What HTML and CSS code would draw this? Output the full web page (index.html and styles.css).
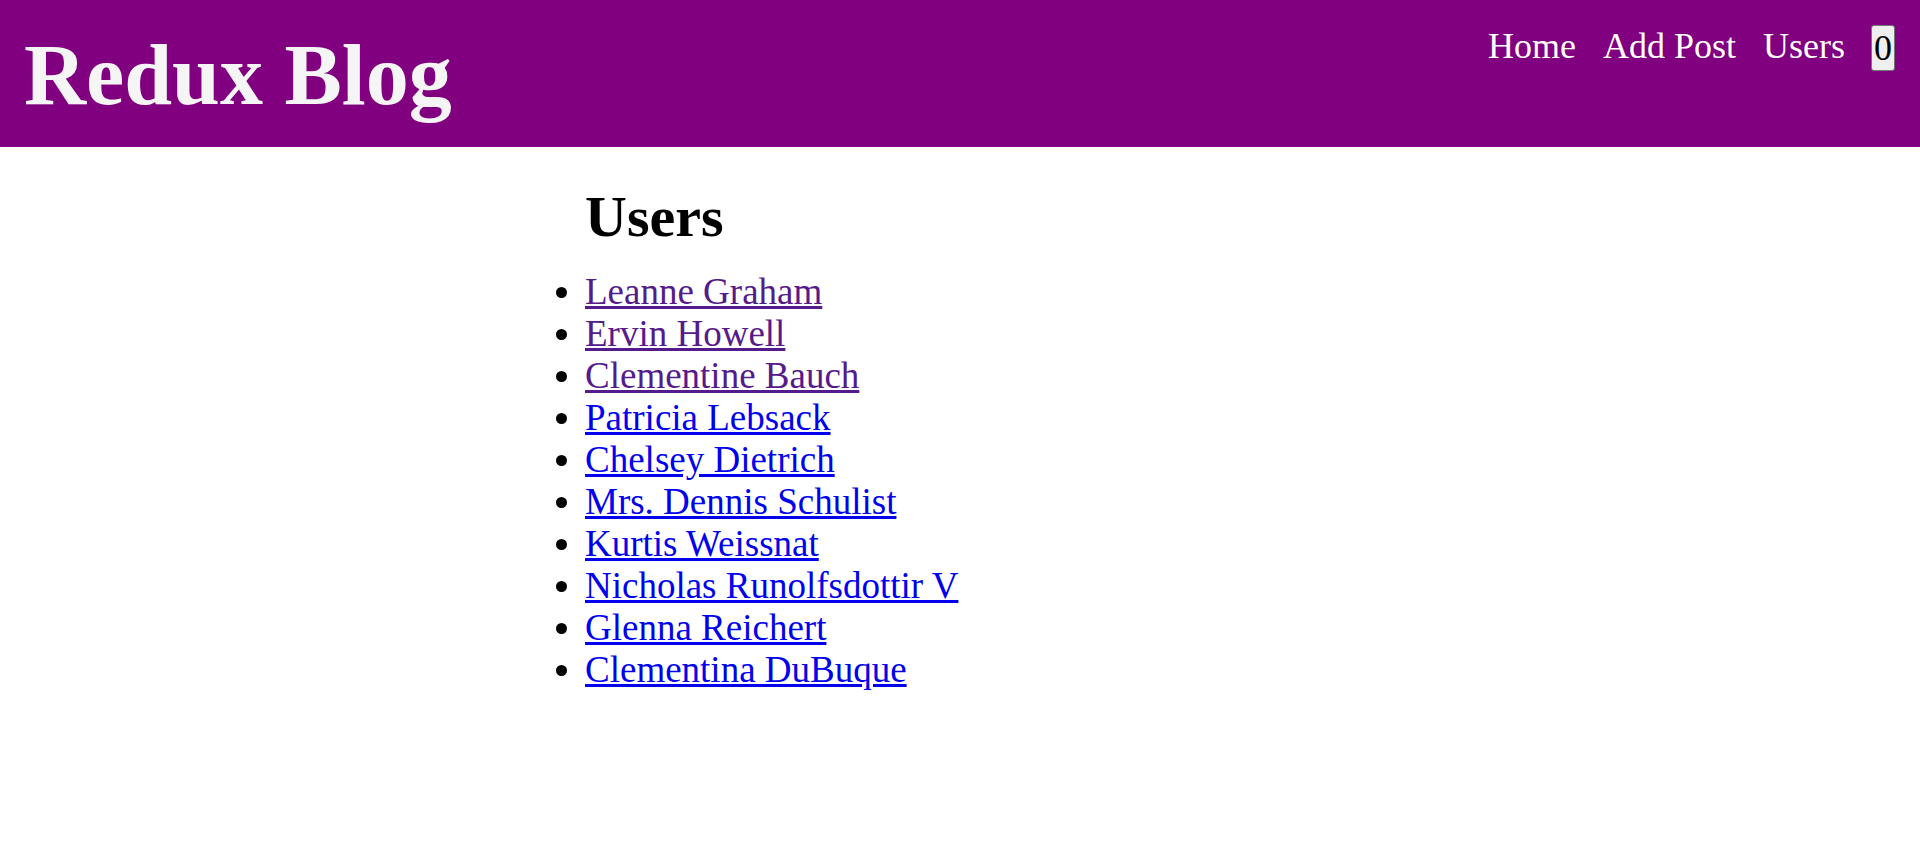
FILE: index.html
```html
<!DOCTYPE html>
<html lang="en">
<head>
<meta charset="utf-8">
<title>Redux Blog</title>
<link rel="stylesheet" href="styles.css">
</head>
<body>
<header class="header">
  <h1 class="brand">Redux Blog</h1>
  <nav class="nav">
    <ul class="nav-list">
      <li><a class="nav-link" href="#">Home</a></li>
      <li><a class="nav-link" href="#">Add Post</a></li>
      <li><a class="nav-link" href="#">Users</a></li>
    </ul>
    <button class="count-btn">0</button>
  </nav>
</header>
<main class="main">
  <section class="users">
    <h2 class="users-title">Users</h2>
    <ul class="user-list">
      <li><a class="user-link visited" href="#">Leanne Graham</a></li>
      <li><a class="user-link visited" href="#">Ervin Howell</a></li>
      <li><a class="user-link visited" href="#">Clementine Bauch</a></li>
      <li><a class="user-link" href="#">Patricia Lebsack</a></li>
      <li><a class="user-link" href="#">Chelsey Dietrich</a></li>
      <li><a class="user-link" href="#">Mrs. Dennis Schulist</a></li>
      <li><a class="user-link" href="#">Kurtis Weissnat</a></li>
      <li><a class="user-link" href="#">Nicholas Runolfsdottir V</a></li>
      <li><a class="user-link" href="#">Glenna Reichert</a></li>
      <li><a class="user-link" href="#">Clementina DuBuque</a></li>
    </ul>
  </section>
</main>
</body>
</html>
```

FILE: styles.css
```css
* {
  box-sizing: border-box;
}

body {
  margin: 0;
  font-family: "Liberation Serif", "Times New Roman", serif;
  font-size: 36px;
  background: #ffffff;
  color: #000000;
}

.header {
  background: #800080;
  display: flex;
  justify-content: space-between;
  align-items: flex-start;
  padding: 0 25px 0 24px;
}

.brand {
  margin: 26px 0 22px;
  font-size: 86px;
  line-height: 99px;
  font-weight: bold;
  color: #f5f5f5;
}

.nav {
  display: flex;
  align-items: flex-start;
  gap: 26px;
  padding-top: 25px;
}

.nav-list {
  list-style: none;
  margin: 0;
  padding: 0;
  display: flex;
  gap: 27px;
  line-height: 42px;
}

.nav-link {
  color: #ffffff;
  text-decoration: none;
}

.count-btn {
  font-family: "Liberation Serif", "Times New Roman", serif;
  font-size: 36px;
  line-height: 42px;
  padding: 1px 2px;
  margin: 0;
  background: #efefef;
  color: #000000;
  border: 1px solid #767676;
  border-radius: 3px;
}

.main {
  max-width: 750px;
  margin: 0 auto;
}

.users-title {
  margin: 38px 0 22px;
  font-size: 58px;
  line-height: 64px;
  font-weight: bold;
}

.user-list {
  margin: 0;
  padding: 0;
  font-size: 37px;
  line-height: 42px;
}

.user-link {
  color: #0000ee;
  text-decoration: underline;
}

.user-link.visited {
  color: #551a8b;
}
```
